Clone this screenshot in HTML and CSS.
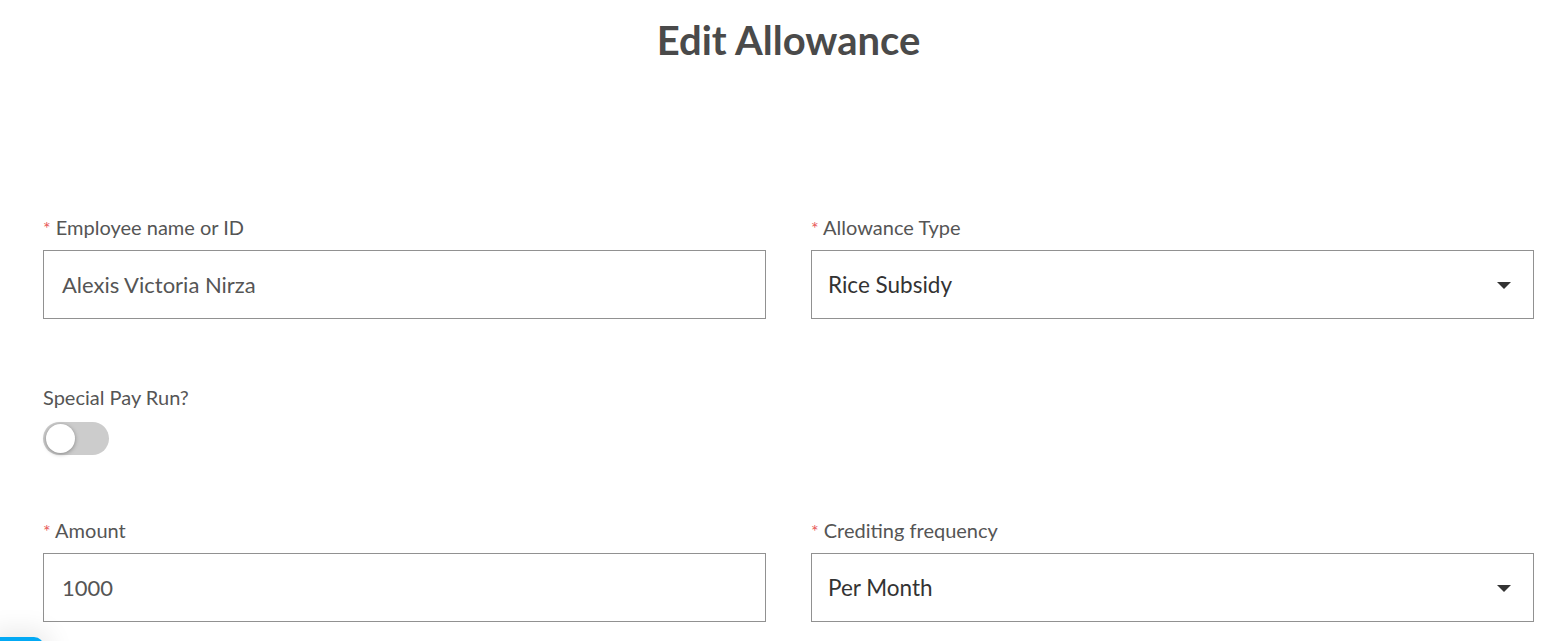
FILE: index.html
```html
<!DOCTYPE html>
<html lang="en">
<head>
<meta charset="utf-8">
<title>Edit Allowance</title>
<link rel="stylesheet" href="styles.css">
</head>
<body>
<main class="page">
  <h1 class="title">Edit Allowance</h1>
  <form class="form">
    <div class="row">
      <div class="field">
        <label class="label"><span class="req">*</span> Employee name or ID</label>
        <div class="input">Alexis Victoria Nirza</div>
      </div>
      <div class="field">
        <label class="label"><span class="req">*</span> Allowance Type</label>
        <div class="input select"><span>Rice Subsidy</span><span class="caret"></span></div>
      </div>
    </div>
    <div class="row toggle-row">
      <div class="field">
        <label class="label">Special Pay Run?</label>
        <div class="switch"><span class="knob"></span></div>
      </div>
    </div>
    <div class="row">
      <div class="field">
        <label class="label"><span class="req">*</span> Amount</label>
        <div class="input">1000</div>
      </div>
      <div class="field">
        <label class="label"><span class="req">*</span> Crediting frequency</label>
        <div class="input select"><span>Per Month</span><span class="caret"></span></div>
      </div>
    </div>
  </form>
</main>
<div class="fab"></div>
</body>
</html>
```
FILE: styles.css
```css
html, body {
  margin: 0;
  padding: 0;
  background: #ffffff;
  overflow: hidden;
}
body {
  font-family: Lato, "Source Sans Pro", "Open Sans", sans-serif;
  color: #555555;
}
.page {
  padding: 0 25px 0 43px;
}
.title {
  margin: 0;
  padding-top: 14px;
  height: 52px;
  line-height: 52px;
  text-align: center;
  font-size: 40px;
  font-weight: 700;
  color: #4a4a4a;
}
.form {
  padding-top: 149px;
  display: flex;
  flex-direction: column;
}
.row {
  display: flex;
  gap: 45px;
}
.field {
  flex: 1 1 0;
  display: flex;
  flex-direction: column;
}
.label {
  font-size: 20px;
  line-height: 24px;
  color: #555555;
  margin-bottom: 10px;
}
.req {
  color: #e8595a;
  font-size: 18px;
}
.input {
  box-sizing: border-box;
  height: 69px;
  border: 1px solid #919191;
  display: flex;
  align-items: center;
  padding: 0 18px;
  font-size: 22px;
  color: #555555;
}
.select {
  justify-content: space-between;
  padding: 0 22px 0 16px;
  color: #333333;
  font-size: 22.5px;
}
.caret {
  width: 0;
  height: 0;
  border-left: 7px solid transparent;
  border-right: 7px solid transparent;
  border-top: 7px solid #333333;
  margin-top: 2px;
}
.toggle-row {
  margin-top: 66px;
}
.switch {
  position: relative;
  width: 66px;
  height: 33px;
  border-radius: 17px;
  background: #cccccc;
  margin-top: 3px;
}
.knob {
  position: absolute;
  left: 3px;
  top: 2px;
  width: 29px;
  height: 29px;
  border-radius: 50%;
  background: #ffffff;
  box-shadow: 0 1px 4px rgba(0,0,0,0.35);
}
.toggle-row + .row {
  margin-top: 63px;
}
.fab {
  position: fixed;
  left: 0;
  bottom: -40px;
  width: 44px;
  height: 44px;
  background: #03a9f4;
  border-top-right-radius: 10px;
  box-shadow: 0 0 24px 8px rgba(0,0,0,0.08);
}
```
